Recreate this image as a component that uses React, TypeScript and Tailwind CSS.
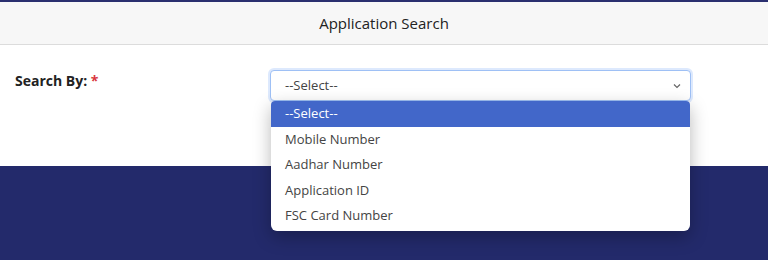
import React from 'react';

const options = ['--Select--', 'Mobile Number', 'Aadhar Number', 'Application ID', 'FSC Card Number'];

export default function App() {
  return (
    <div className="min-h-[260px] bg-[#232a6b] font-['Open_Sans','Lato',sans-serif] text-[#333]">
      <div className="bg-white border-t-2 border-[#2a2f6f]">
        <header className="h-[43px] bg-[#f7f7f7] border-b border-[#dcdcdc] flex items-center justify-center">
          <h1 className="text-[15px] text-[#222]">Application Search</h1>
        </header>

        <main className="h-[121px] px-[15px] pt-[25px] flex">
          <label className="w-[255px] text-[14px] font-bold text-[#222]">
            Search By: <span className="text-[#d9363e]">*</span>
          </label>

          <div className="relative w-[421px]">
            <div className="h-[31px] rounded-[4px] border border-[#9ec0f5] shadow-[0_0_0_2px_rgba(66,133,244,0.18)] bg-white flex items-center justify-between pl-[14px] pr-[8px]">
              <span className="text-[13px] text-[#444]">--Select--</span>
              <svg width="10" height="10" viewBox="0 0 10 10" fill="none" stroke="#666" strokeWidth="1.2">
                <path d="M2 3.5 L5 6.5 L8 3.5" />
              </svg>
            </div>

            <ul className="absolute left-[1px] right-[1px] top-[31px] z-10 bg-white rounded-b-[6px] rounded-t-[4px] overflow-hidden shadow-[0_6px_18px_rgba(0,0,0,0.28)] pb-[2px]">
              {options.map((opt, i) => (
                <li
                  key={opt}
                  className={`h-[25.5px] flex items-center pl-[14px] text-[13px] ${
                    i === 0 ? 'bg-[#4267c9] text-white' : 'text-[#444]'
                  }`}
                >
                  {opt}
                </li>
              ))}
            </ul>
          </div>
        </main>
      </div>
    </div>
  );
}
